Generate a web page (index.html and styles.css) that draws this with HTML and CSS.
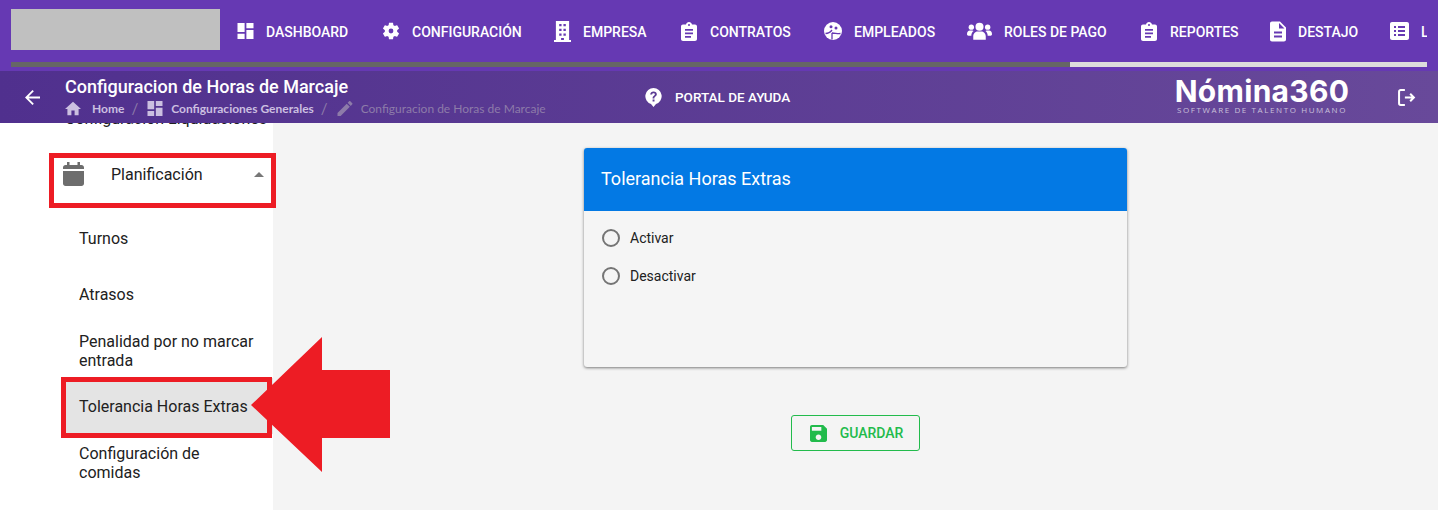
FILE: index.html
```html
<!DOCTYPE html>
<html lang="es">
<head>
    <meta charset="UTF-8">
    <title>Tolerancia Horas Extras</title>
    <link rel="stylesheet" href="styles.css">
</head>
<body>
    <svg class="defs" width="0" height="0">
        <symbol id="i-dashboard" viewBox="3 3 18 18"><path d="M3 13h8V3H3v10zm0 8h8v-6H3v6zm10 0h8V11h-8v10zm0-18v6h8V3h-8z"/></symbol>
        <symbol id="i-clipboard" viewBox="0 0 16 19"><path fill-rule="evenodd" d="M2 2.500h3C5.300 1 6.500 0 8 0s2.700 1 3 2.500h3c1.100 0 2 .9 2 2V17c0 1.100-.9 2-2 2H2c-1.100 0-2-.9-2-2V4.500c0-1.100.9-2 2-2zM8 2a1 1 0 1 0 0 2 1 1 0 0 0 0-2zM4 7v1.800h8V7H4zm0 3.500v1.800h8v-1.800H4zm0 3.500v1.800h6V14H4z"/></symbol>
    </svg>

    <header class="topbar">
        <div class="topbar-row">
            <div class="logo-box"></div>
            <nav class="menu">
                <a class="menu-item"><svg class="ic ic-dash"><use href="#i-dashboard"/></svg>DASHBOARD</a>
                <a class="menu-item"><svg class="ic w18" viewBox="2.500 1.500 19 21"><path fill-rule="evenodd" d="M19.140 12.940c.04-.3.06-.61.06-.94 0-.32-.02-.64-.07-.94l2.030-1.580c.18-.14.23-.41.12-.61l-1.920-3.320c-.12-.22-.37-.29-.59-.22l-2.390.96c-.5-.38-1.030-.7-1.620-.94l-.36-2.540c-.04-.24-.24-.41-.48-.41h-3.840c-.24 0-.43.17-.47.41l-.36 2.540c-.59.24-1.130.57-1.620.94l-2.390-.96c-.22-.08-.47 0-.59.22L2.740 8.870c-.12.21-.08.47.12.61l2.030 1.580c-.05.3-.09.63-.09.94s.02.64.07.94l-2.030 1.580c-.18.14-.23.41-.12.61l1.920 3.320c.12.22.37.29.59.22l2.390-.96c.5.38 1.030.7 1.620.94l.36 2.540c.05.24.24.41.48.41h3.840c.24 0 .44-.17.47-.41l.36-2.540c.59-.24 1.130-.56 1.620-.94l2.390.96c.22.08.47 0 .59-.22l1.920-3.320c.12-.22.07-.47-.12-.61l-2.010-1.580zM12 14.800a2.800 2.800 0 1 1 0-5.600 2.800 2.800 0 0 1 0 5.600z"/></svg>CONFIGURACIÓN</a>
                <a class="menu-item"><svg class="ic w17 tall" viewBox="0 0 18 22"><path fill-rule="evenodd" d="M2 0h14v20h2v2H0v-2h2V0zm3.500 3v2.500h2.500V3H5.500zm4.500 0v2.500h2.500V3H10zM5.500 8v2.500h2.500V8H5.500zm4.500 0v2.500h2.500V8H10zm-4.500 5v2.500h2.500V13H5.500zm4.500 0v2.500h2.500V13H10zm-2.500 5v2h3v-2h-3z"/></svg>EMPRESA</a>
                <a class="menu-item"><svg class="ic w18 clip"><use href="#i-clipboard"/></svg>CONTRATOS</a>
                <a class="menu-item"><svg class="ic w18" viewBox="0 0 18 18"><circle cx="9" cy="9" r="9"/><path class="ic-cut" d="M1.500 11.500c3 0 5-1.500 6.500-3.500M8 11v6.500M8 11c3 0 6 1 8.500.5"/><circle class="ic-dot" cx="7" cy="4.800" r="1.500"/><circle class="ic-dot" cx="12" cy="6" r="1.500"/></svg>EMPLEADOS</a>
                <a class="menu-item"><svg class="ic w25" viewBox="0 0 26 18"><circle cx="13" cy="4.500" r="4.200"/><circle cx="4.500" cy="5" r="2.800"/><circle cx="21.500" cy="5" r="2.800"/><path d="M6.500 18v-3.500C6.500 11.500 9 9.500 11 9.500h4c2 0 4.500 2 4.500 5V18h-13zM0 12c0-2 1.300-3.500 3-3.500h2.500c.5 0 1 .2 1.400.5-1.500 1-2.400 2.800-2.400 5H1.500C.6 14 0 13.400 0 12.500V12zm26 0c0-2-1.300-3.500-3-3.500h-2.500c-.5 0-1 .2-1.400.5 1.500 1 2.400 2.800 2.400 5h3c.9 0 1.500-.6 1.500-1.500V12z"/></svg>ROLES DE PAGO</a>
                <a class="menu-item"><svg class="ic w18 clip"><use href="#i-clipboard"/></svg>REPORTES</a>
                <a class="menu-item"><svg class="ic w16 tall" viewBox="4 2 16 20"><path d="M14 2H6c-1.100 0-1.990.9-1.990 2L4 20c0 1.100.89 2 1.990 2H18c1.100 0 2-.9 2-2V8l-6-6zm2 16H8v-2h8v2zm0-4H8v-2h8v2zm-3-5V3.500L18.500 9H13z"/></svg>DESTAJO</a>
                <a class="menu-item"><svg class="ic w19" viewBox="0 0 19 18"><path fill-rule="evenodd" d="M2 0h15c1.100 0 2 .9 2 2v14c0 1.100-.9 2-2 2H2c-1.100 0-2-.9-2-2V2C0 .9.900 0 2 0zm2 4v2h2V4H4zm4 0v2h7V4H8zM4 8v2h2V8H4zm4 0v2h7V8H8zm-4 4v2h2v-2H4zm4 0v2h7v-2H8z"/></svg>LIQUIDACIONES</a>
            </nav>
        </div>
        <div class="progress"><div class="progress-fill"></div></div>
    </header>

    <div class="subbar">
        <a class="back">
            <svg class="back-ic" viewBox="4 4 16 16"><path d="M20 11H7.830l5.590-5.590L12 4l-8 8 8 8 1.410-1.410L7.830 13H20v-2z"/></svg>
        </a>
        <div class="page-head">
            <h1 class="page-title">Configuracion de Horas de Marcaje</h1>
            <div class="crumbs">
                <svg class="crumb-ic home" viewBox="2 3 20 17"><path d="M10 20v-6h4v6h5v-8h3L12 3 2 12h3v8z"/></svg>
                <span class="crumb">Home</span>
                <span class="crumb-sep">/</span>
                <svg class="crumb-ic" viewBox="3 3 18 18"><path d="M3 13h8V3H3v10zm0 8h8v-6H3v6zm10 0h8V11h-8v10zm0-18v6h8V3h-8z"/></svg>
                <span class="crumb">Configuraciones Generales</span>
                <span class="crumb-sep">/</span>
                <svg class="crumb-ic dim" viewBox="3 3 18 18"><path d="M3 17.250V21h3.750L17.810 9.940l-3.750-3.750L3 17.250zM20.710 7.040c.39-.39.39-1.020 0-1.410l-2.340-2.340c-.39-.39-1.020-.39-1.410 0l-1.830 1.830 3.750 3.750 1.830-1.830z"/></svg>
                <span class="crumb-last">Configuracion de Horas de Marcaje</span>
            </div>
        </div>
        <a class="help">
            <svg class="help-ic" viewBox="0 0 17 19"><path fill-rule="evenodd" d="M8.500 0a8.200 8.200 0 0 1 2.500 16l-2.500 3-2.500-3A8.200 8.200 0 0 1 8.500 0zm-.9 11.400v2h1.900v-2H7.600zM8.600 3.500c-1.900 0-3.300 1.200-3.400 3h1.900c.1-.8.600-1.300 1.500-1.300.8 0 1.300.5 1.300 1.100 0 .6-.4 1-1 1.500-.9.700-1.300 1.300-1.300 2.700h1.800c0-.9.200-1.300 1-1.900.9-.7 1.400-1.400 1.400-2.400 0-1.600-1.400-2.700-3.200-2.700z"/></svg>
            PORTAL DE AYUDA
        </a>
        <div class="brand">
            <div class="brand-name">Nómina360</div>
            <div class="brand-sub">SOFTWARE DE TALENTO HUMANO</div>
        </div>
        <a class="logout">
            <svg class="logout-ic" viewBox="0 0 17 16"><path d="M6.500 1H2.500C1.700 1 1 1.700 1 2.500v11c0 .8.7 1.500 1.500 1.500h4M6.500 8H15M11.500 4.500 15 8l-3.500 3.500" fill="none" stroke="#fff" stroke-width="1.900"/></svg>
        </a>
    </div>

    <div class="content">
        <aside class="sidebar">
            <div class="side-list">
                <a class="side-row side-prev">Configuración Liquidaciones</a>
                <a class="side-row side-group">
                    <svg class="cal-ic" viewBox="0 0 21 24"><path d="M4 0h2.500v3h8V0H17v3h1.500C19.900 3 21 4.100 21 5.500V7H0V5.500C0 4.100 1.100 3 2.500 3H4V0zM0 9h21v12.500c0 1.400-1.100 2.500-2.500 2.500h-16C1.100 24 0 22.900 0 21.500V9z"/></svg>
                    <span class="side-group-label">Planificación</span>
                    <span class="caret"></span>
                </a>
                <a class="side-row side-sub first">Turnos</a>
                <a class="side-row side-sub">Atrasos</a>
                <a class="side-row side-sub two-lines">Penalidad por no marcar entrada</a>
                <a class="side-row side-sub active">Tolerancia Horas Extras</a>
                <a class="side-row side-sub two-lines">Configuración de comidas</a>
            </div>
        </aside>

        <main class="main">
            <section class="card">
                <h2 class="card-head">Tolerancia Horas Extras</h2>
                <div class="card-body">
                    <label class="radio"><span class="radio-dot"></span>Activar</label>
                    <label class="radio"><span class="radio-dot"></span>Desactivar</label>
                </div>
            </section>
            <button class="save">
                <svg class="save-ic" viewBox="3 3 18 18"><path d="M17 3H5c-1.110 0-2 .9-2 2v14c0 1.100.89 2 2 2h14c1.100 0 2-.9 2-2V7l-4-4zm-5 16c-1.660 0-3-1.340-3-3s1.340-3 3-3 3 1.340 3 3-1.340 3-3 3zm3-10H5V5h10v4z"/></svg>
                GUARDAR
            </button>
        </main>

        <!-- red marks drawn over the capture -->
        <div class="mark mark-group"></div>
        <div class="mark mark-item"></div>
        <svg class="mark-arrow" viewBox="0 0 139 135"><path d="M0 68 71 0v33h68v68H71v34z"/></svg>
    </div>
</body>
</html>
```

FILE: styles.css
```css
* {
    margin: 0;
    padding: 0;
    box-sizing: border-box;
}

html, body {
    height: 510px;
    overflow: hidden;
}

body {
    background: #f4f4f4;
    font-family: Roboto, "Liberation Sans", sans-serif;
    color: #212121;
}

.defs {
    position: absolute;
}

/* top bar */
.topbar {
    background: #6639b3;
    height: 71px;
    padding: 0 11px;
}

.topbar-row {
    display: flex;
    height: 62px;
}

.logo-box {
    flex: none;
    width: 209px;
    height: 41px;
    margin-top: 9px;
    background: #c0c0c0;
}

.menu {
    flex: 1;
    min-width: 0;
    display: grid;
    grid-template-columns: 145px 172px 126px 144px 143px 173px 130px 120px 1fr;
    align-items: center;
    margin-left: 17px;
    overflow: hidden;
    white-space: nowrap;
}

.menu-item {
    display: flex;
    align-items: center;
    gap: 12px;
    padding-top: 2px;
    color: #fff;
    font-size: 14px;
    font-weight: 500;
}

.ic {
    flex: none;
    fill: #fff;
    height: 18px;
    margin-top: -2px;
}

.ic-dash { width: 17px; height: 16px; }
.w16 { width: 16px; }
.w17 { width: 17px; }
.w18 { width: 18px; }
.w19 { width: 19px; }
.w25 { width: 25px; }
.clip { height: 19px; }
.tall { height: 21px; }

.ic-cut {
    fill: none;
    stroke: #6639b3;
    stroke-width: 1.300;
}

.ic-dot {
    fill: #6639b3;
}

.progress {
    height: 5px;
    background: #dcdcdc;
}

.progress-fill {
    width: 1059px;
    height: 5px;
    background: #666;
}

/* page header */
.subbar {
    display: flex;
    align-items: center;
    height: 52px;
    background: linear-gradient(90deg, #50308e, #68499a);
    color: #fff;
}

.back {
    display: flex;
    flex: none;
    width: 65px;
    padding-left: 25px;
}

.back-ic {
    width: 15px;
    height: 15px;
    fill: #fff;
}

.page-head {
    flex: none;
    width: 580px;
}

.page-title {
    font-size: 18px;
    font-weight: 500;
    line-height: 22px;
}

.crumbs {
    display: flex;
    align-items: center;
    height: 20px;
    font-family: Lato, Roboto, sans-serif;
    font-size: 12px;
    color: #cbbfe0;
}

.crumb-ic {
    flex: none;
    width: 16px;
    height: 15px;
    fill: #cbbfe0;
    margin-right: 8px;
}

.crumb-ic.home {
    margin-right: 11px;
}

.crumb-ic.dim {
    fill: #8d7ba9;
}

.crumb {
    font-weight: 700;
}

.crumb-sep {
    margin: 0 9px 0 7px;
    color: #8d7ba9;
    font-size: 15px;
}

.crumb-last {
    color: #8d7ba9;
}

.help {
    display: flex;
    align-items: center;
    gap: 13px;
    flex: none;
    font-size: 13.500px;
    font-weight: 500;
}

.help-ic {
    width: 17px;
    height: 19px;
    fill: #fff;
}

.brand {
    margin-left: auto;
    width: 180px;
    padding-bottom: 3px;
    text-align: center;
}

.brand-name {
    font-family: Inter, "Open Sans", sans-serif;
    font-size: 30px;
    font-weight: 700;
    letter-spacing: 0.300px;
    line-height: 28px;
    white-space: nowrap;
}

.brand-sub {
    font-family: "Open Sans", sans-serif;
    font-size: 8px;
    letter-spacing: 1.600px;
    line-height: 10px;
    color: #c9c0da;
    white-space: nowrap;
}

.logout {
    display: flex;
    flex: none;
    width: 86px;
    justify-content: flex-end;
    padding-right: 22px;
}

.logout-ic {
    width: 18px;
    height: 17px;
}

/* below the header */
.content {
    position: relative;
    display: flex;
    height: 387px;
}

.sidebar {
    flex: none;
    width: 273px;
    height: 387px;
    background: #fff;
    overflow: hidden;
}

.side-list {
    margin-top: -33px;
    font-size: 16px;
    line-height: 19px;
}

.side-row {
    display: flex;
    align-items: center;
    height: 56px;
}

.side-prev {
    padding-left: 65px;
    white-space: nowrap;
}

.side-group {
    padding-left: 63px;
    padding-right: 9px;
}

.cal-ic {
    flex: none;
    width: 21px;
    height: 24px;
    fill: #6d6d6d;
}

.side-group-label {
    margin-left: 27px;
}

.caret {
    margin-left: auto;
    border-left: 5px solid transparent;
    border-right: 5px solid transparent;
    border-bottom: 5px solid #777;
}

.side-sub {
    margin-left: 61px;
    padding: 0 12px 0 18px;
}

.side-sub.first {
    margin-top: 8px;
}

.side-sub.two-lines {
    padding-top: 2px;
}

.side-sub.active {
    background: #e4e4e4;
}

.main {
    flex: 1;
    display: flex;
    flex-direction: column;
    align-items: center;
    padding-top: 25px;
}

.card {
    width: 543px;
    height: 219px;
    background: #f5f5f5;
    border-radius: 3px;
    box-shadow: 0 1px 3px rgba(0, 0, 0, 0.5);
    overflow: hidden;
}

.card-head {
    display: flex;
    align-items: center;
    height: 63px;
    padding: 0 0 2px 17px;
    background: #0379e4;
    color: #fff;
    font-size: 18px;
    font-weight: 400;
}

.card-body {
    display: flex;
    flex-direction: column;
    gap: 16px;
    padding: 16px 18px;
}

.radio {
    display: flex;
    align-items: center;
    gap: 10px;
    height: 22px;
    font-size: 14px;
}

.radio-dot {
    width: 18px;
    height: 18px;
    border: 2px solid #757575;
    border-radius: 50%;
}

.save {
    display: flex;
    align-items: center;
    justify-content: center;
    gap: 13px;
    width: 129px;
    height: 36px;
    margin-top: 48px;
    padding-left: 2px;
    background: transparent;
    border: 1px solid #22bb4c;
    border-radius: 3px;
    color: #22bb4c;
    font-family: inherit;
    font-size: 14px;
    font-weight: 500;
}

.save-ic {
    width: 17px;
    height: 17px;
    fill: #22bb4c;
}

/* annotation overlay */
.mark {
    position: absolute;
    border: 5px solid #ed1c24;
}

.mark-group {
    left: 49px;
    top: 30px;
    width: 227px;
    height: 55px;
}

.mark-item {
    left: 61px;
    top: 254px;
    width: 211px;
    height: 61px;
}

.mark-arrow {
    position: absolute;
    left: 251px;
    top: 214px;
    width: 139px;
    height: 135px;
    fill: #ed1c24;
}
```
